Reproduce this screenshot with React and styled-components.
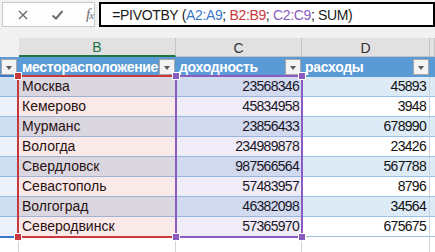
import React from "react";
import styled, { createGlobalStyle } from "styled-components";

const GlobalStyle = createGlobalStyle`
  html, body {
    margin: 0;
    padding: 0;
    background: #ffffff;
  }
  body {
    font-family: "Liberation Sans", Arial, sans-serif;
  }
`;

const COLS = "19px 157px 126px 128px 5px";

const rows = [
  ["Москва", "23568346", "45893"],
  ["Кемерово", "45834958", "3948"],
  ["Мурманс", "23856433", "678990"],
  ["Вологда", "234989878", "23426"],
  ["Свердловск", "987566564", "567788"],
  ["Севастополь", "57483957", "8796"],
  ["Волгоград", "46382098", "34564"],
  ["Северодвинск", "57365970", "675675"],
];

const Window = styled.div`
  width: 435px;
  height: 252px;
  overflow: hidden;
  background: #ffffff;
`;

const FormulaBar = styled.div`
  height: 38px;
  box-sizing: border-box;
  padding: 2px 0 0 2px;
  display: flex;
  align-items: flex-start;
  background: #f1f1f1;
`;

const IconBox = styled.div`
  width: 109px;
  height: 25px;
  box-sizing: border-box;
  border: 1px solid #c8c8c8;
  background: #fdfdfd;
  display: flex;
  align-items: center;
  padding-left: 13px;
  gap: 20px;
`;

const IconSlot = styled.span`
  width: 14px;
  height: 14px;
  display: flex;
  align-items: center;
  justify-content: center;
`;

const Fx = styled.span`
  font-family: "Liberation Serif", "Times New Roman", serif;
  font-style: italic;
  font-size: 15px;
  color: #6e6e6e;
  margin-left: 2px;
  letter-spacing: -1px;
  small {
    font-size: 11px;
  }
`;

const FormulaInput = styled.div`
  margin-left: 4px;
  width: 400px;
  height: 25px;
  box-sizing: border-box;
  border: 2px solid #000000;
  background: #ffffff;
  display: flex;
  align-items: center;
  padding-left: 11px;
  font-size: 14px;
  letter-spacing: -0.35px;
  color: #1a1a1a;
  white-space: pre;
`;

const Ref = styled.span`
  color: ${(p) => p.$color};
`;

const Sheet = styled.div`
  position: relative;
`;

const GridRow = styled.div`
  display: grid;
  grid-template-columns: ${COLS};
  height: ${(p) => p.$h || 20}px;
`;

const ColHead = styled.div`
  box-sizing: border-box;
  background: ${(p) => (p.$blank ? "#f1f1f1" : "#e1e1e1")};
  border-right: ${(p) => (p.$blank ? "none" : "1px solid #c3c3c3")};
  border-bottom: ${(p) => (p.$active ? "2px solid #217346" : p.$blank ? "none" : "1px solid #c3c3c3")};
  color: ${(p) => (p.$active ? "#217346" : "#333333")};
  font-size: 14px;
  display: flex;
  align-items: center;
  justify-content: center;
  padding-top: 1px;
`;

const HeadCell = styled.div`
  box-sizing: border-box;
  background: #5b9bd5;
  color: #ffffff;
  font-weight: bold;
  font-size: 14px;
  letter-spacing: -0.3px;
  display: flex;
  align-items: center;
  justify-content: ${(p) => (p.$empty ? "flex-end" : "space-between")};
  padding: 0 ${(p) => (p.$empty ? 2 : 1)}px 0 3px;
  overflow: hidden;
  white-space: nowrap;
`;

const FilterButton = styled.span`
  flex: none;
  width: 16px;
  height: 16px;
  box-sizing: border-box;
  border: 1px solid #a8a8a8;
  background: #f3f3f3;
  display: flex;
  align-items: center;
  justify-content: center;
  &::after {
    content: "";
    border-left: 3.5px solid transparent;
    border-right: 3.5px solid transparent;
    border-top: 4px solid #595959;
    margin-top: 1px;
  }
`;

const Cell = styled.div`
  box-sizing: border-box;
  background: ${(p) => (p.$odd ? "#ddebf7" : "#ffffff")};
  border-bottom: 1px solid #9bc2e6;
  border-right: ${(p) => (p.$edge ? "1px solid #c9d6e6" : "none")};
  color: #111111;
  font-size: 14px;
  letter-spacing: ${(p) => (p.$num ? "-0.7px" : "0")};
  display: flex;
  align-items: flex-end;
  justify-content: ${(p) => (p.$num ? "flex-end" : "flex-start")};
  padding: 0 3px 2px 3px;
  white-space: nowrap;
  overflow: hidden;
`;

const BlankCell = styled.div`
  box-sizing: border-box;
  border-right: ${(p) => (p.$line ? "1px solid #d4d4d4" : "none")};
`;

const RangeBox = styled.div`
  position: absolute;
  top: 37px;
  left: ${(p) => p.$left}px;
  width: ${(p) => p.$width}px;
  height: 163px;
  box-sizing: border-box;
  border: 2px solid ${(p) => p.$color};
  background: ${(p) => p.$fill};
  background-clip: padding-box;
  pointer-events: none;
`;

const Handle = styled.div`
  position: absolute;
  left: ${(p) => p.$x - 3}px;
  top: ${(p) => p.$y - 3}px;
  width: 6px;
  height: 6px;
  box-sizing: border-box;
  background: ${(p) => p.$color};
  outline: 1px solid #ffffff;
`;

const CrossIcon = () => (
  <svg width="12" height="12" viewBox="0 0 12 12">
    <path d="M2 2 L10 10 M10 2 L2 10" stroke="#6e6e6e" strokeWidth="1.4" fill="none" />
  </svg>
);

const CheckIcon = () => (
  <svg width="13" height="12" viewBox="0 0 13 12">
    <path d="M1.5 6.5 L5 9.5 L11.5 2" stroke="#6e6e6e" strokeWidth="2" fill="none" />
  </svg>
);

const RED = "#c8393d";
const PURPLE = "#8b5cc0";
const BLUE = "#3b78c8";

export default function App() {
  return (
    <Window>
      <GlobalStyle />
      <FormulaBar>
        <IconBox>
          <IconSlot>
            <CrossIcon />
          </IconSlot>
          <IconSlot>
            <CheckIcon />
          </IconSlot>
          <Fx>
            f<small>x</small>
          </Fx>
        </IconBox>
        <FormulaInput>
          {"=PIVOTBY ("}
          <Ref $color={BLUE}>A2:A9</Ref>
          {"; "}
          <Ref $color={RED}>B2:B9</Ref>
          {"; "}
          <Ref $color={PURPLE}>C2:C9</Ref>
          {"; SUM)"}
        </FormulaInput>
      </FormulaBar>

      <Sheet>
        <GridRow $h={19}>
          <ColHead $blank />
          <ColHead $active>B</ColHead>
          <ColHead>C</ColHead>
          <ColHead>D</ColHead>
          <ColHead />
        </GridRow>

        <GridRow>
          <HeadCell $empty>
            <FilterButton />
          </HeadCell>
          <HeadCell>
            месторасположение
            <FilterButton />
          </HeadCell>
          <HeadCell>
            доходность
            <FilterButton />
          </HeadCell>
          <HeadCell>
            расходы
            <FilterButton />
          </HeadCell>
          <HeadCell />
        </GridRow>

        {rows.map(([city, income, cost], i) => (
          <GridRow key={city}>
            <Cell $odd={i % 2 === 0} />
            <Cell $odd={i % 2 === 0}>{city}</Cell>
            <Cell $odd={i % 2 === 0} $num>
              {income}
            </Cell>
            <Cell $odd={i % 2 === 0} $num $edge>
              {cost}
            </Cell>
            <Cell $odd={i % 2 === 0} />
          </GridRow>
        ))}

        <GridRow $h={20}>
          <BlankCell $line />
          <BlankCell $line />
          <BlankCell $line />
          <BlankCell $line />
          <BlankCell />
        </GridRow>

        <RangeBox $left={-10} $width={29} $color={BLUE} $fill="rgba(68,114,196,0.1)" />
        <RangeBox $left={17} $width={160} $color={RED} $fill="rgba(205,35,35,0.1)" />
        <RangeBox $left={175} $width={128} $color={PURPLE} $fill="rgba(105,65,175,0.1)" />

        <Handle $x={18} $y={38} $color={RED} />
        <Handle $x={18} $y={199} $color={RED} />
        <Handle $x={176} $y={38} $color={PURPLE} />
        <Handle $x={176} $y={199} $color={PURPLE} />
        <Handle $x={302} $y={38} $color={PURPLE} />
        <Handle $x={302} $y={199} $color={PURPLE} />
      </Sheet>
    </Window>
  );
}
